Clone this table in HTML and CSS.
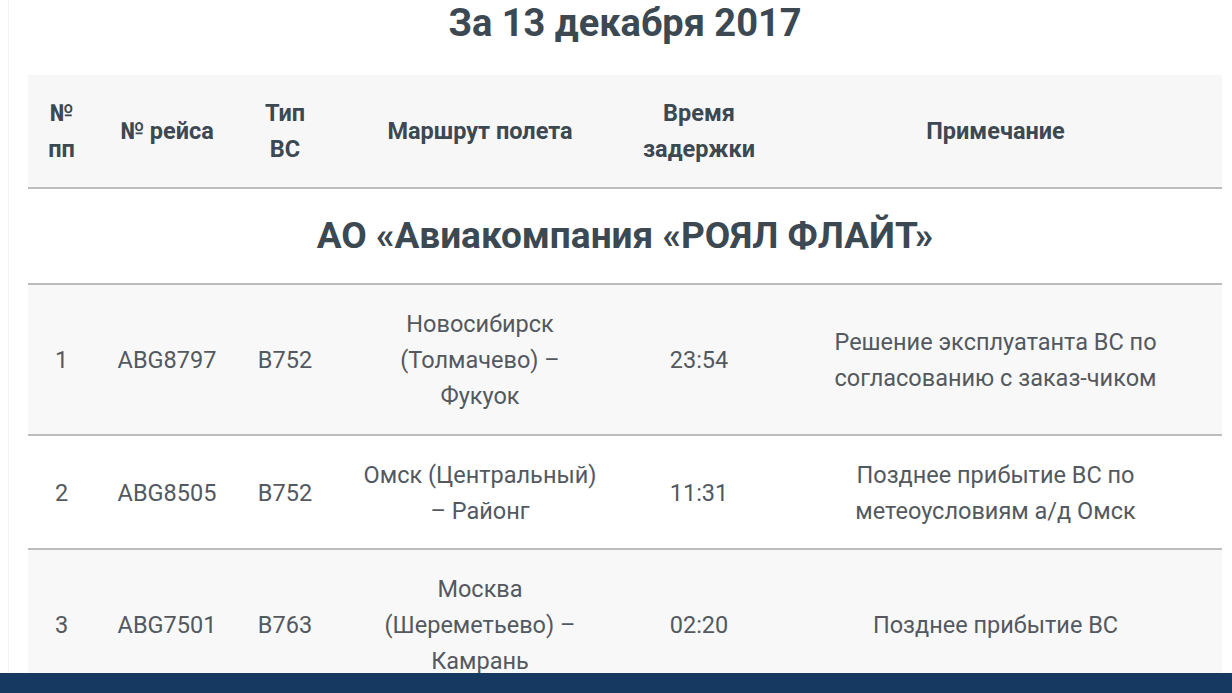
FILE: index.html
```html
<!DOCTYPE html>
<html lang="ru">
<head>
<meta charset="utf-8">
<title>Задержки рейсов</title>
<link rel="stylesheet" href="styles.css">
</head>
<body>
<div class="page">
  <h1 class="title">За 13 декабря 2017</h1>
  <table class="delays">
    <colgroup>
      <col class="c-num">
      <col class="c-flight">
      <col class="c-type">
      <col class="c-route">
      <col class="c-time">
      <col class="c-note">
    </colgroup>
    <thead>
      <tr>
        <th>№<br>пп</th>
        <th>№ рейса</th>
        <th>Тип<br>ВС</th>
        <th>Маршрут полета</th>
        <th>Время<br>задержки</th>
        <th>Примечание</th>
      </tr>
    </thead>
    <tbody>
      <tr class="company">
        <td colspan="6">АО «Авиакомпания «РОЯЛ ФЛАЙТ»</td>
      </tr>
      <tr class="odd">
        <td>1</td>
        <td>ABG8797</td>
        <td>B752</td>
        <td class="route">Новосибирск (Толмачево) – Фукуок</td>
        <td>23:54</td>
        <td class="note">Решение эксплуатанта ВС по согласованию с заказ-чиком</td>
      </tr>
      <tr>
        <td>2</td>
        <td>ABG8505</td>
        <td>B752</td>
        <td class="route">Омск (Центральный) – Районг</td>
        <td>11:31</td>
        <td class="note">Позднее прибытие ВС по метеоусловиям а/д Омск</td>
      </tr>
      <tr class="odd">
        <td>3</td>
        <td>ABG7501</td>
        <td>B763</td>
        <td class="route">Москва (Шереметьево) – Камрань</td>
        <td>02:20</td>
        <td class="note">Позднее прибытие ВС</td>
      </tr>
    </tbody>
  </table>
</div>
<div class="footer-bar"></div>
</body>
</html>
```

FILE: styles.css
```css
html, body {
  margin: 0;
  padding: 0;
  background: #ffffff;
}

body {
  font-family: "Roboto", "Liberation Sans", sans-serif;
  color: #53595f;
}

.page {
  margin-left: 8px;
  border-left: 1px solid #f3f3f3;
  padding: 0 10px 40px 19px;
  min-height: 700px;
}

.title {
  margin: 0;
  padding-top: 0;
  height: 75px;
  font-size: 38px;
  line-height: 46px;
  font-weight: 700;
  text-align: center;
  color: #3c4852;
}

.delays {
  width: 1194px;
  border-collapse: collapse;
  table-layout: fixed;
}

.c-num { width: 67px; }
.c-flight { width: 144px; }
.c-type { width: 92px; }
.c-route { width: 298px; }
.c-time { width: 140px; }
.c-note { width: 453px; }

.delays th,
.delays td {
  text-align: center;
  vertical-align: middle;
  padding: 20px 4px;
  font-size: 23.5px;
  line-height: 36px;
  border-bottom: 2px solid #bcbcbc;
}

.delays th {
  background: #f7f7f7;
  font-weight: 700;
  color: #3c4852;
  font-size: 23.5px;
}

.delays td {
  padding-top: 21px;
  padding-bottom: 19px;
}

.delays td.route {
  padding-left: 28px;
  padding-right: 28px;
}

.delays td.note {
  padding-left: 30px;
  padding-right: 30px;
}

.delays tr.odd td {
  background: #f8f8f8;
  padding-top: 21px;
  padding-bottom: 20px;
}

.delays tr.company td {
  font-size: 37px;
  line-height: 54px;
  font-weight: 700;
  color: #3c4852;
  padding: 20px 0;
}

.footer-bar {
  position: fixed;
  left: 0;
  right: 0;
  bottom: 0;
  height: 20px;
  background: #163961;
}
```
